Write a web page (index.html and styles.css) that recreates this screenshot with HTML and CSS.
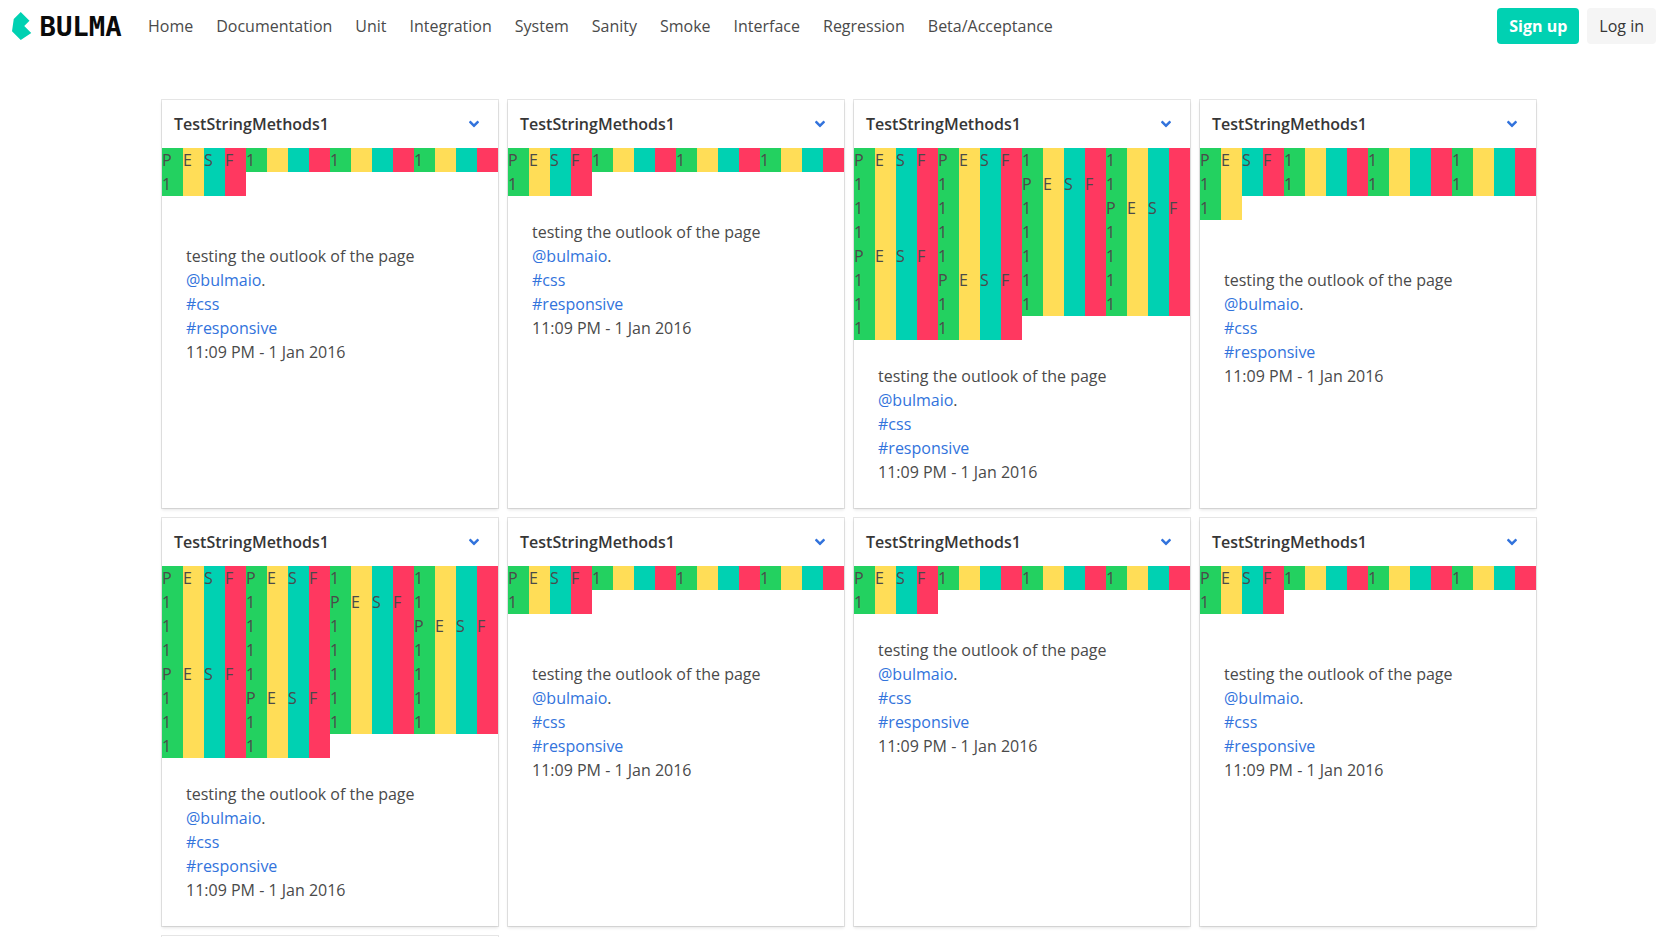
FILE: index.html
```html
<!DOCTYPE html>
<html lang="en">
<head>
<meta charset="utf-8">
<meta name="viewport" content="width=device-width, initial-scale=1">
<title>Bulma test board</title>
<link rel="stylesheet" href="styles.css">
</head>
<body>
<nav class="navbar" aria-label="Main">
  <a class="brand" href="#" aria-label="Bulma">
    <svg class="brand-logo" viewBox="0 0 640 160" width="112" height="28" aria-hidden="true">
      <polygon fill="#00d1b2" points="0,110 10,40 50,0 100,50 70,80 110,120 50,160"/>
      <text class="brand-word" x="157" y="137">BULMA</text>
    </svg>
  </a>
  <div class="nav-links">
    <a href="#">Home</a>
    <a href="#">Documentation</a>
    <a href="#">Unit</a>
    <a href="#">Integration</a>
    <a href="#">System</a>
    <a href="#">Sanity</a>
    <a href="#">Smoke</a>
    <a href="#">Interface</a>
    <a href="#">Regression</a>
    <a href="#">Beta/Acceptance</a>
  </div>
  <div class="nav-buttons">
    <button class="button button-primary" type="button">Sign up</button>
    <button class="button button-light" type="button">Log in</button>
  </div>
</nav>
<svg class="symbols" aria-hidden="true">
  <symbol id="angle-down" viewBox="0 0 320 512">
    <path fill="currentColor" d="M143 352.3L7 216.3c-9.4-9.4-9.4-24.6 0-33.9l22.6-22.6c9.4-9.4 24.6-9.4 33.9 0l96.4 96.4 96.4-96.4c9.4-9.4 24.6-9.4 33.9 0l22.6 22.6c9.4 9.4 9.4 24.6 0 33.9l-136 136c-9.2 9.4-24.4 9.4-33.8 0z"/>
  </symbol>
</svg>
<main class="board" id="board"></main>
<template id="card-template">
  <article class="card">
    <header class="card-header">
      <h2 class="card-title">TestStringMethods1</h2>
      <button class="card-toggle" type="button" aria-label="more options"><svg width="10" height="16" aria-hidden="true"><use href="#angle-down"/></svg></button>
    </header>
    <div class="results"></div>
    <div class="card-content">
      <p>testing the outlook of the page</p>
      <p><a href="#">@bulmaio</a>.</p>
      <p><a href="#">#css</a></p>
      <p><a href="#">#responsive</a></p>
      <time datetime="2016-01-01T23:09">11:09 PM - 1 Jan 2016</time>
    </div>
  </article>
</template>
<script src="script.js"></script>
</body>
</html>
```
FILE: styles.css
```css
* {
  box-sizing: border-box;
}

body {
  margin: 0;
  background: #fff;
  color: #4a4a4a;
  font-family: "Open Sans", "Noto Sans", sans-serif;
  font-size: 16px;
  line-height: 24px;
}

a {
  color: #3273dc;
  text-decoration: none;
}

p {
  margin: 0;
}

button {
  border: 0;
  font: inherit;
  cursor: pointer;
}

.navbar {
  display: flex;
  align-items: center;
  min-height: 52px;
  padding: 0 12px;
}

.brand {
  display: flex;
  padding-right: 24px;
}

.brand-logo {
  overflow: visible;
}

.brand-word {
  fill: #0a0a0a;
  font-family: "DejaVu Sans Mono", monospace;
  font-size: 156px;
  font-weight: 700;
}

.nav-links {
  display: flex;
  flex: 1;
  gap: 23px;
}

.nav-links a {
  padding: 8px 0;
  color: #4a4a4a;
}

.nav-buttons {
  display: flex;
  gap: 8px;
}

.button {
  height: 36px;
  padding: 0 12px;
  border-radius: 4px;
  white-space: nowrap;
}

.button-primary {
  background: #00d1b2;
  color: #fff;
  font-weight: 700;
}

.button-light {
  background: #f5f5f5;
  color: #363636;
}

.symbols {
  display: none;
}

.board {
  display: grid;
  grid-template-columns: repeat(4, 1fr);
  grid-auto-rows: minmax(408px, auto);
  gap: 10px;
  padding: 48px 132px 48px 162px;
}

.card {
  background: #fff;
  box-shadow: 0 2px 3px rgba(10, 10, 10, 0.1), 0 0 0 1px rgba(10, 10, 10, 0.1);
}

.card-header {
  display: flex;
  align-items: center;
  justify-content: space-between;
}

.card-title {
  margin: 0;
  padding: 12px;
  color: #363636;
  font-size: 16px;
  font-weight: 600;
}

.card-toggle {
  display: flex;
  align-items: center;
  justify-content: center;
  width: 48px;
  height: 48px;
  padding: 0;
  background: none;
  color: #3273dc;
}

.results {
  display: grid;
  grid-template-columns: repeat(16, 1fr);
  grid-auto-rows: 24px;
}

.passed {
  background: #23d160;
}

.errored {
  background: #ffdd57;
}

.skipped {
  background: #00d1b2;
}

.failed {
  background: #ff3860;
}

.card-content {
  padding: 24px;
}

.card-spaced .card-content {
  padding-top: 48px;
}
```
FILE: script.js
```js
// Each result list is a run of four-cell groups: "h" is a heading, "1" a count.
const short = "h1111";
const medium = "h11111111";
const long = "hh11" + "11h1" + "111h" + "1111" + "h111" + "1h11" + "1111" + "11";

const cards = [
  { groups: short, spaced: true },
  { groups: short },
  { groups: long },
  { groups: medium, spaced: true, cells: 34 },
  { groups: long },
  { groups: short, spaced: true },
  { groups: short },
  { groups: short, spaced: true }
];

const kinds = ["passed", "errored", "skipped", "failed"];
const texts = { h: ["P", "E", "S", "F"], 1: ["1", "", "", ""] };
const template = document.getElementById("card-template");
const board = document.getElementById("board");

for (const card of cards) {
  const node = template.content.cloneNode(true);
  const results = node.querySelector(".results");
  const cells = [...card.groups].flatMap((group) => texts[group]);
  cells.slice(0, card.cells || cells.length).forEach((text, index) => {
    const cell = document.createElement("span");
    cell.className = kinds[index % 4];
    cell.textContent = text;
    results.append(cell);
  });
  if (card.spaced) {
    node.querySelector(".card").classList.add("card-spaced");
  }
  board.append(node);
}

// An empty card closes the board.
const last = document.createElement("article");
last.className = "card";
board.append(last);
```
